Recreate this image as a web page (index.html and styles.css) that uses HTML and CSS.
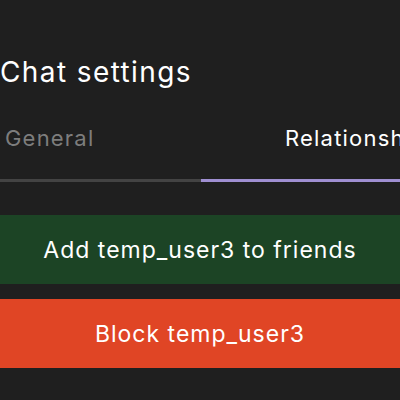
FILE: index.html
```html
<!DOCTYPE html>
<html>
<head>
<meta charset="utf-8">
<link rel="stylesheet" href="styles.css">
</head>
<body>
<div class="page">
  <h1 class="title">Chat settings</h1>
  <div class="tabs">
    <div class="tab tab-general">General</div>
    <div class="tab tab-rel active">Relationships</div>
  </div>
  <div class="actions">
    <button class="btn btn-add">Add temp_user3 to friends</button>
    <button class="btn btn-block">Block temp_user3</button>
  </div>
</div>
</body>
</html>
```
FILE: styles.css
```css
html, body {
  margin: 0;
  padding: 0;
  background: #1f1f1f;
  overflow: hidden;
}
.page {
  width: 400px;
  height: 400px;
  font-family: Inter, "Noto Sans", sans-serif;
  color: #ffffff;
  overflow: hidden;
}
.title {
  margin: 0;
  padding: 55px 0 0 0;
  font-size: 28px;
  letter-spacing: 1.4px;
  font-weight: 400;
  line-height: 34px;
  white-space: nowrap;
}
.tabs {
  display: flex;
  margin-top: 36px;
  white-space: nowrap;
}
.tab {
  font-size: 22px;
  letter-spacing: 1.2px;
  line-height: 26px;
  padding-bottom: 28px;
  border-bottom: 3px solid #434343;
  overflow: hidden;
}
.tab-general {
  width: 196px;
  padding-left: 5px;
  color: #7d7d7d;
}
.tab-rel {
  width: 115px;
  padding-left: 84px;
  color: #ffffff;
  border-bottom-color: #9f8fd1;
}
.actions {
  display: flex;
  flex-direction: column;
  gap: 15px;
  margin-top: 33px;
}
.btn {
  display: block;
  width: 400px;
  height: 69px;
  border: 0;
  margin: 0;
  padding: 0;
  color: #ffffff;
  font-family: Inter, "Noto Sans", sans-serif;
  font-size: 23px;
  letter-spacing: 1px;
  text-align: center;
}
.btn-add {
  background: #1c4425;
}
.btn-block {
  background: #e04525;
}
```
